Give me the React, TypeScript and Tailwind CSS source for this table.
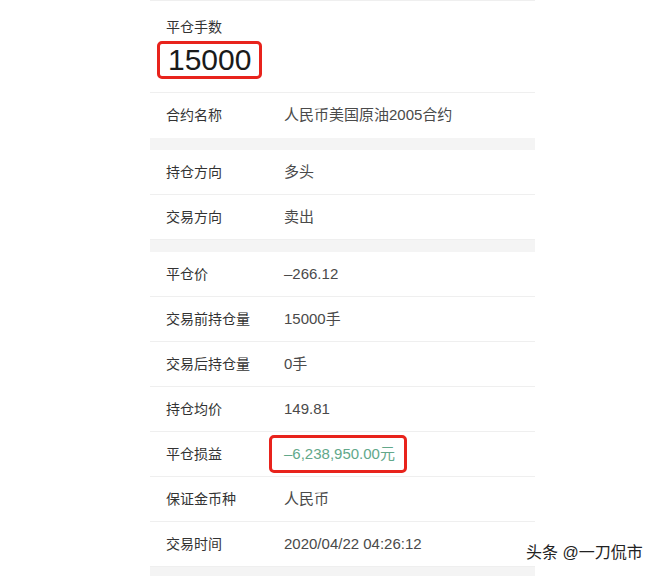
const font = "font-['Liberation_Sans','Noto_Sans_CJK_SC',sans-serif]";

type Row = { label: string; value: string; highlight?: boolean };

const groups: Row[][] = [
  [{ label: '合约名称', value: '人民币美国原油2005合约' }],
  [
    { label: '持仓方向', value: '多头' },
    { label: '交易方向', value: '卖出' },
  ],
  [
    { label: '平仓价', value: '–266.12' },
    { label: '交易前持仓量', value: '15000手' },
    { label: '交易后持仓量', value: '0手' },
    { label: '持仓均价', value: '149.81' },
    { label: '平仓损益', value: '–6,238,950.00元', highlight: true },
    { label: '保证金币种', value: '人民币' },
    { label: '交易时间', value: '2020/04/22 04:26:12' },
  ],
];

function DetailRow({ row, last }: { row: Row; last: boolean }) {
  return (
    <div className={`flex items-center h-[45px] pl-4 ${last ? '' : 'border-b border-[#efefef]'}`}>
      <span className="w-[118px] text-[14px] text-[#333]">{row.label}</span>
      {row.highlight ? (
        <span className="relative text-[15px] text-[#62a88a]">
          {row.value}
          <span className="absolute -left-[15px] -right-[12px] -top-[8px] -bottom-[8px] border-[3px] border-[#e8231c] rounded-[5px]" />
        </span>
      ) : (
        <span className="text-[15px] text-[#4a4a4a]">{row.value}</span>
      )}
    </div>
  );
}

export default function App() {
  return (
    <div className={`relative w-[664px] h-[576px] bg-white overflow-hidden ${font}`}>
      <div className="ml-[150px] w-[385px] flex flex-col">
        <div className="h-[93px] pl-4 pt-[16px] border-t border-b border-[#efefef]">
          <div className="text-[14px] leading-[20px] text-[#333]">平仓手数</div>
          <div className="mt-[4px] -ml-[9px] inline-block border-[3px] border-[#e8231c] rounded-[5px] px-[8px] h-[38px] text-[30px] leading-[32px] text-[#1a1a1a]">
            15000
          </div>
        </div>
        {groups.map((g, gi) => (
          <div key={gi}>
            {gi > 0 && <div className="h-3 bg-[#f4f4f4]" />}
            {g.map((r, i) => (
              <DetailRow key={r.label} row={r} last={i === g.length - 1 && gi === 0} />
            ))}
          </div>
        ))}
        <div className="h-3 bg-[#f4f4f4]" />
      </div>
      <div className="absolute left-[526px] top-[541px] text-[16px] text-[#222] [text-shadow:0_0_3px_#fff,0_0_2px_#fff]">
        头条 @一刀侃市
      </div>
    </div>
  );
}
